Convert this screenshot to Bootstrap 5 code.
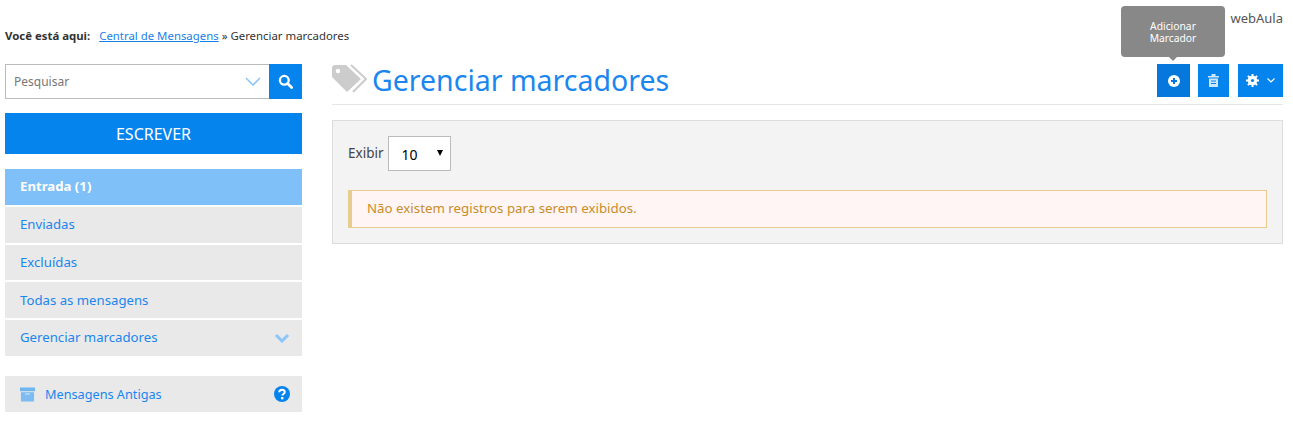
<!DOCTYPE html>
<html lang="pt-BR">
  <head>
    <meta charset="utf-8" />
    <title>Gerenciar marcadores</title>
    <link href="https://cdn.jsdelivr.net/npm/bootstrap@5.3.2/dist/css/bootstrap.min.css" rel="stylesheet" />
    <style>
      body { font-family: "Noto Sans", "DejaVu Sans", sans-serif; font-size: 13.5px; color: #444; background: #fff; }
      .page-wrap { padding: 0 10px 0 5px; }
      .top-brand { height: 28px; padding-top: 9px; font-size: 13px; line-height: 18px; color: #555; }
      .crumbs { height: 36px; font-size: 11.4px; line-height: 16px; color: #333; }
      .crumbs b { margin-right: 6px; font-weight: 700; }
      .crumbs a { color: #1a80e6; }
      .side-col { width: 297px; flex: none; }
      .main-col { margin-left: 30px; }
      .search-box { height: 35px; border: 1px solid #bbb; border-right: 0; }
      .search-box input { border: 0; outline: 0; min-width: 0; padding: 1px 8px 0; font: inherit; font-size: 12px; color: #666; }
      .search-box input::placeholder { color: #777; opacity: 1; }
      .search-btn { width: 33px; height: 35px; margin-top: -1px; background: #0684ee; border: 0; }
      .write-btn { height: 41px; margin: 14px 0 15px; background: #0684ee; color: #fff; font-size: 16px; border-radius: 0; border: 0; }
      .write-btn:hover { background: #0684ee; color: #fff; }
      .side-item { height: 35.75px; margin-bottom: 2px; padding: 1px 12px 0 15px; background: #e9e9e9; color: #1a86ee; font-size: 13.2px; text-decoration: none; }
      .side-item.is-on { background: #80c0f8; color: #fff; font-weight: 700; }
      .side-old { margin-top: 20px; }
      .side-old span { margin-left: 2px; font-size: 12.7px; }
      .title-bar { height: 41px; border-bottom: 1px solid #e6e6e6; }
      .title-bar h1 { margin: 0 0 0 5px; font-size: 28.5px; line-height: 32px; color: #1a86ee; font-weight: 400; }
      .tool-btn { height: 33px; background: #0684ee; border: 0; border-radius: 0; padding: 0; }
      .tool-add { width: 33px; margin-right: 8px; background: #0678dc; }
      .tool-del { width: 31px; margin-right: 9px; }
      .tool-cfg { width: 45px; }
      .hint-box { position: absolute; left: -36px; top: -58px; width: 104px; height: 51px; padding-top: 14px; background: #888; color: #fff; font-size: 10.3px; line-height: 12px; text-align: center; border-radius: 4px; }
      .hint-box::after { content: ""; position: absolute; left: 48px; top: 51px; border: 4px solid transparent; border-top-color: #888; border-bottom: 0; }
      .grid-panel { margin-top: 15px; height: 124px; padding: 15px; background: #f3f3f3; border: 1px solid #ddd; }
      .show-sel { width: 63px; height: 35px; margin-left: 4px; padding: 0 0 0 13px; background: #fff; border: 1px solid #bbb; color: #000; position: relative; font-size: 14px; line-height: 35px; }
      .show-sel::after { content: ""; position: absolute; right: 7px; top: 13px; border: 3.5px solid transparent; border-top: 6px solid #000; border-bottom: 0; }
      .warn-box { margin-top: 19px; height: 38px; padding: 0 15px 1px; background: #fff5f5; border: 1px solid #e8cc8e; border-left-width: 4px; color: #c98d28; font-size: 13.3px; }
    </style>
  </head>
  <body>
    <div class="page-wrap">
      <div class="top-brand text-end">webAula</div>
      <div class="crumbs"><b>Você está aqui:</b> <a href="#">Central de Mensagens</a> » Gerenciar marcadores</div>
      <div class="d-flex">
        <aside class="side-col">
          <div class="search-box d-flex align-items-center">
            <input class="flex-grow-1" type="text" placeholder="Pesquisar" />
            <svg class="me-2" width="16" height="9" viewBox="0 0 16 9"><path d="M1 1l7 7 7-7" fill="none" stroke="#8cc6f8" stroke-width="1.6"/></svg>
            <button class="search-btn d-flex align-items-center justify-content-center" type="button" aria-label="Pesquisar">
              <svg width="15" height="15" viewBox="0 0 15 15"><circle cx="6.3" cy="6.3" r="4.4" fill="none" stroke="#fff" stroke-width="2.3"/><path d="M9.6 9.6l4 4" stroke="#fff" stroke-width="2.8" stroke-linecap="round"/></svg>
            </button>
          </div>
          <button class="btn write-btn w-100" type="button">ESCREVER</button>
          <a class="side-item is-on d-flex align-items-center" href="#">Entrada (1)</a>
          <a class="side-item d-flex align-items-center" href="#">Enviadas</a>
          <a class="side-item d-flex align-items-center" href="#">Excluídas</a>
          <a class="side-item d-flex align-items-center" href="#">Todas as mensagens</a>
          <a class="side-item d-flex align-items-center justify-content-between" href="#">Gerenciar marcadores
            <svg width="16" height="10" viewBox="0 0 16 10"><path d="M2 2l6 6 6-6" fill="none" stroke="#8cc6f8" stroke-width="3"/></svg>
          </a>
          <a class="side-item side-old d-flex align-items-center" href="#">
            <svg class="me-2" width="15" height="15" viewBox="0 0 16 15"><path d="M0 0h16v4H0z" fill="#6fb5f0"/><path d="M1 5h14v10H1z" fill="#7dbcf3"/><path d="M5.5 7h5" stroke="#e9e9e9"/></svg>
            <span class="flex-grow-1">Mensagens Antigas</span>
            <svg width="16" height="16" viewBox="0 0 16 16"><circle cx="8" cy="8" r="8" fill="#0684ee"/><path d="M5.2 6.200C5.300 3 10.800 3 10.800 6c0 2-2.500 2-2.500 3.600" fill="none" stroke="#fff" stroke-width="2"/><path d="M7 11h2.400v2.300H7z" fill="#fff"/></svg>
          </a>
        </aside>
        <main class="main-col flex-grow-1">
          <div class="title-bar d-flex align-items-start">
            <svg width="35" height="29" viewBox="0 0 35 29"><path d="M0 3v10l15 15 14-13L14 1H2z" fill="#ccc"/><circle cx="6" cy="7" r="2.2" fill="#fff"/><path d="M19 1l15 14-13 13" fill="none" stroke="#ccc" stroke-width="2"/></svg>
            <h1 class="flex-grow-1">Gerenciar marcadores</h1>
            <div class="position-relative">
              <button class="tool-btn tool-add d-flex align-items-center justify-content-center" type="button" aria-label="Adicionar Marcador">
                <svg width="12" height="12" viewBox="0 0 12 12"><circle cx="6" cy="6" r="6" fill="#fff"/><path d="M3 6h6M6 3v6" stroke="#0678dc" stroke-width="2"/></svg>
              </button>
              <div class="hint-box">Adicionar<br />Marcador</div>
            </div>
            <button class="tool-btn tool-del d-flex align-items-center justify-content-center" type="button" aria-label="Excluir">
              <svg width="11" height="13" viewBox="0 0 11 13"><path d="M0 2h11v1.500H0zM3.500 0h4v2h-4z" fill="#cfe7fc"/><path d="M1 4.500h9V13H1z" fill="#cfe7fc"/><path d="M3 7h5M3 9.500h5" stroke="#0684ee"/></svg>
            </button>
            <button class="tool-btn tool-cfg d-flex align-items-center justify-content-center gap-2" type="button" aria-label="Opções">
              <svg width="13" height="13" viewBox="0 0 13 13"><circle cx="6.5" cy="6.5" r="3.5" fill="none" stroke="#fff" stroke-width="2.6"/><path d="M6.500 0v13M0 6.500h13M1.900 1.900l9.200 9.200M11.100 1.900l-9.200 9.200" stroke="#fff" stroke-width="2"/><circle cx="6.5" cy="6.5" r="1.6" fill="#0684ee"/></svg>
              <svg width="8" height="5" viewBox="0 0 8 5"><path d="M.5.500l3.500 3.500 3.500-3.500" fill="none" stroke="#fff" stroke-width="1.2"/></svg>
            </button>
          </div>
          <section class="grid-panel">
            <div class="d-flex align-items-center">Exibir <div class="show-sel">10</div></div>
            <div class="warn-box d-flex align-items-center">Não existem registros para serem exibidos.</div>
          </section>
        </main>
      </div>
    </div>
    <script src="https://cdn.jsdelivr.net/npm/bootstrap@5.3.2/dist/js/bootstrap.bundle.min.js"></script>
  </body>
</html>
